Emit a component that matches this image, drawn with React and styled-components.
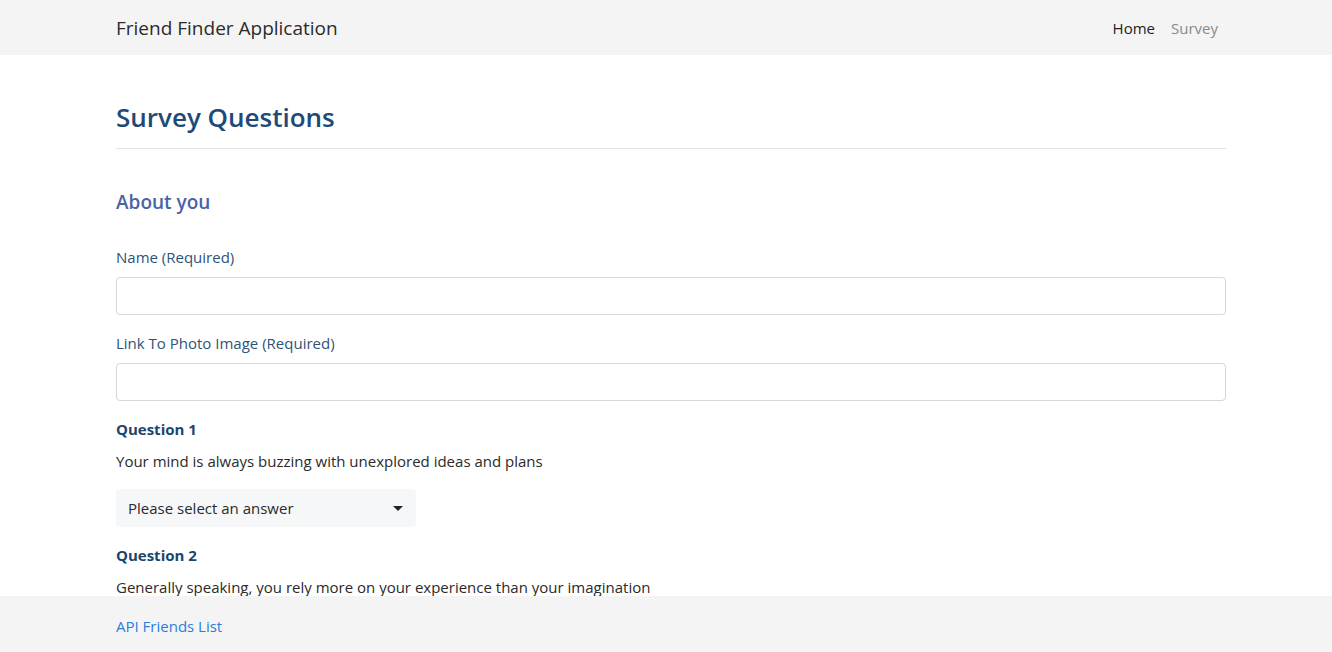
import React from "react";
import styled, { createGlobalStyle } from "styled-components";

const GlobalStyle = createGlobalStyle`
  body {
    margin: 0;
    background: #fff;
    font-family: "Open Sans", "Noto Sans", sans-serif;
    font-size: 16px;
    line-height: 1.5;
    color: #212529;
  }
`;

const Navbar = styled.nav`
  height: 55px;
  box-sizing: border-box;
  padding-top: 2px;
  background: #f4f4f4;
  display: flex;
  align-items: center;
`;

const NavInner = styled.div`
  width: 1110px;
  margin-left: 116px;
  display: flex;
  align-items: center;
  justify-content: space-between;
`;

const Brand = styled.a`
  font-size: 19px;
  color: #2b2b2b;
  text-decoration: none;
`;

const NavLinks = styled.div`
  display: flex;
`;

const NavLink = styled.a`
  padding: 0 8px;
  font-size: 15px;
  text-decoration: none;
  color: ${(p) => (p.active ? "#222" : "#8a8a8a")};
`;

const Main = styled.main`
  width: 1110px;
  margin-left: 116px;
  padding: 43px 0 80px;
`;

const Title = styled.h1`
  margin: 0;
  font-size: 26px;
  line-height: 38px;
  font-weight: 600;
  color: #1d4a78;
`;

const Rule = styled.hr`
  margin: 12px 0 0;
  border: 0;
  border-top: 1px solid #e2e2e2;
`;

const SectionTitle = styled.h4`
  margin: 41px 0 31px;
  font-size: 19px;
  line-height: 24px;
  font-weight: 600;
  color: #4a63a2;
`;

const FormGroup = styled.div`
  margin-bottom: 16px;
`;

const Label = styled.label`
  display: block;
  margin-bottom: 8px;
  font-size: 15px;
  line-height: 24px;
  color: ${(p) => (p.strong ? "#1b4670" : "#2e5377")};
  font-weight: ${(p) => (p.strong ? 700 : 400)};
`;

const Input = styled.input`
  display: block;
  box-sizing: border-box;
  width: 100%;
  height: 38px;
  padding: 6px 12px;
  border: 1px solid #d3d6da;
  border-radius: 4px;
  font: inherit;
  outline: none;
`;

const QuestionText = styled.p`
  margin: 0 0 16px;
  font-size: 15px;
  line-height: 24px;
  color: #2a2a2a;
`;

const SelectWrap = styled.div`
  position: relative;
  width: 300px;
  &::after {
    content: "";
    position: absolute;
    right: 13px;
    top: 17px;
    border-left: 5px solid transparent;
    border-right: 5px solid transparent;
    border-top: 5px solid #222;
    pointer-events: none;
  }
`;

const Select = styled.select`
  appearance: none;
  box-sizing: border-box;
  width: 100%;
  height: 38px;
  padding: 0 12px;
  border: 0;
  border-radius: 4px;
  background: #f6f7f8;
  font-family: inherit;
  font-size: 15px;
  color: #2a2a2a;
  outline: none;
`;

const Footer = styled.footer`
  position: fixed;
  left: 0;
  right: 0;
  bottom: 0;
  height: 56px;
  box-sizing: border-box;
  padding-top: 4px;
  background: #f4f4f4;
  display: flex;
  align-items: center;
`;

const FooterLink = styled.a`
  margin-left: 116px;
  font-size: 15px;
  color: #2b7de0;
  text-decoration: none;
`;

const questions = [
  "Your mind is always buzzing with unexplored ideas and plans",
  "Generally speaking, you rely more on your experience than your imagination",
];

const Question = ({ n, text }) => (
  <FormGroup>
    <Label strong>Question {n}</Label>
    <QuestionText>{text}</QuestionText>
    <SelectWrap>
      <Select defaultValue="">
        <option value="">Please select an answer</option>
        <option>1 (Strongly Disagree)</option>
        <option>2</option>
        <option>3</option>
        <option>4</option>
        <option>5 (Strongly Agree)</option>
      </Select>
    </SelectWrap>
  </FormGroup>
);

export default function App() {
  return (
    <>
      <GlobalStyle />
      <Navbar>
        <NavInner>
          <Brand href="#">Friend Finder Application</Brand>
          <NavLinks>
            <NavLink href="#" active>
              Home
            </NavLink>
            <NavLink href="#">Survey</NavLink>
          </NavLinks>
        </NavInner>
      </Navbar>
      <Main>
        <Title>Survey Questions</Title>
        <Rule />
        <SectionTitle>About you</SectionTitle>
        <FormGroup>
          <Label>Name (Required)</Label>
          <Input type="text" />
        </FormGroup>
        <FormGroup>
          <Label>Link To Photo Image (Required)</Label>
          <Input type="text" />
        </FormGroup>
        {questions.map((q, i) => (
          <Question key={i} n={i + 1} text={q} />
        ))}
      </Main>
      <Footer>
        <FooterLink href="#">API Friends List</FooterLink>
      </Footer>
    </>
  );
}
